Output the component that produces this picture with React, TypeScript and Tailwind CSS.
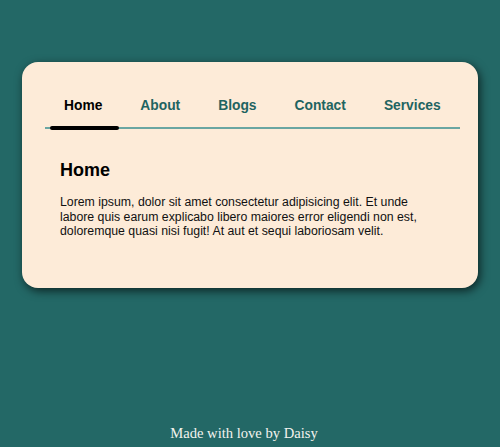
import React from "react";

const tabs = ["Home", "About", "Blogs", "Contact", "Services"];

const App: React.FC = () => {
  return (
    <div className="min-h-[447px] flex flex-col bg-[#236866] font-['Liberation_Sans',Arial,sans-serif]">
      {/* CARD */}
      <div className="mt-[62px] mx-auto w-[456px] h-[226px] bg-[#fdebd8] rounded-[16px] shadow-[2px_3px_10px_rgba(0,0,0,0.65)] px-[23px] pt-[35px]">
        <nav className="flex w-[415px] border-b-2 border-[#6aa6a2]">
          {tabs.map((t, i) => (
            <div
              key={t}
              className={
                "relative px-[19px] pb-[12px] text-[13.8px] leading-[18px] font-bold " +
                (i === 0 ? "text-black" : "text-[#1f6461]")
              }
            >
              {t}
              {i === 0 && (
                <span className="absolute left-[5px] right-[2px] bottom-[-3px] h-[4px] rounded-full bg-black" />
              )}
            </div>
          ))}
        </nav>

        <div className="px-[15px] pt-[29px]">
          <h2 className="text-[18px] leading-[24px] font-bold text-black">Home</h2>
          <p className="mt-[13px] w-[380px] text-[12.3px] leading-[14.5px] text-[#111]">
            Lorem ipsum, dolor sit amet consectetur adipisicing elit. Et unde
            labore quis earum explicabo libero maiores error eligendi non est,
            doloremque quasi nisi fugit! At aut et sequi laboriosam velit.
          </p>
        </div>
      </div>

      {/* FOOTER */}
      <footer className="mt-auto pb-[5px] pr-[12px] text-center text-[14.6px] leading-[18px] text-[#f3f3ee] font-['Liberation_Serif','Times_New_Roman',serif]">
        Made with love by Daisy
      </footer>
    </div>
  );
};

export default App;
